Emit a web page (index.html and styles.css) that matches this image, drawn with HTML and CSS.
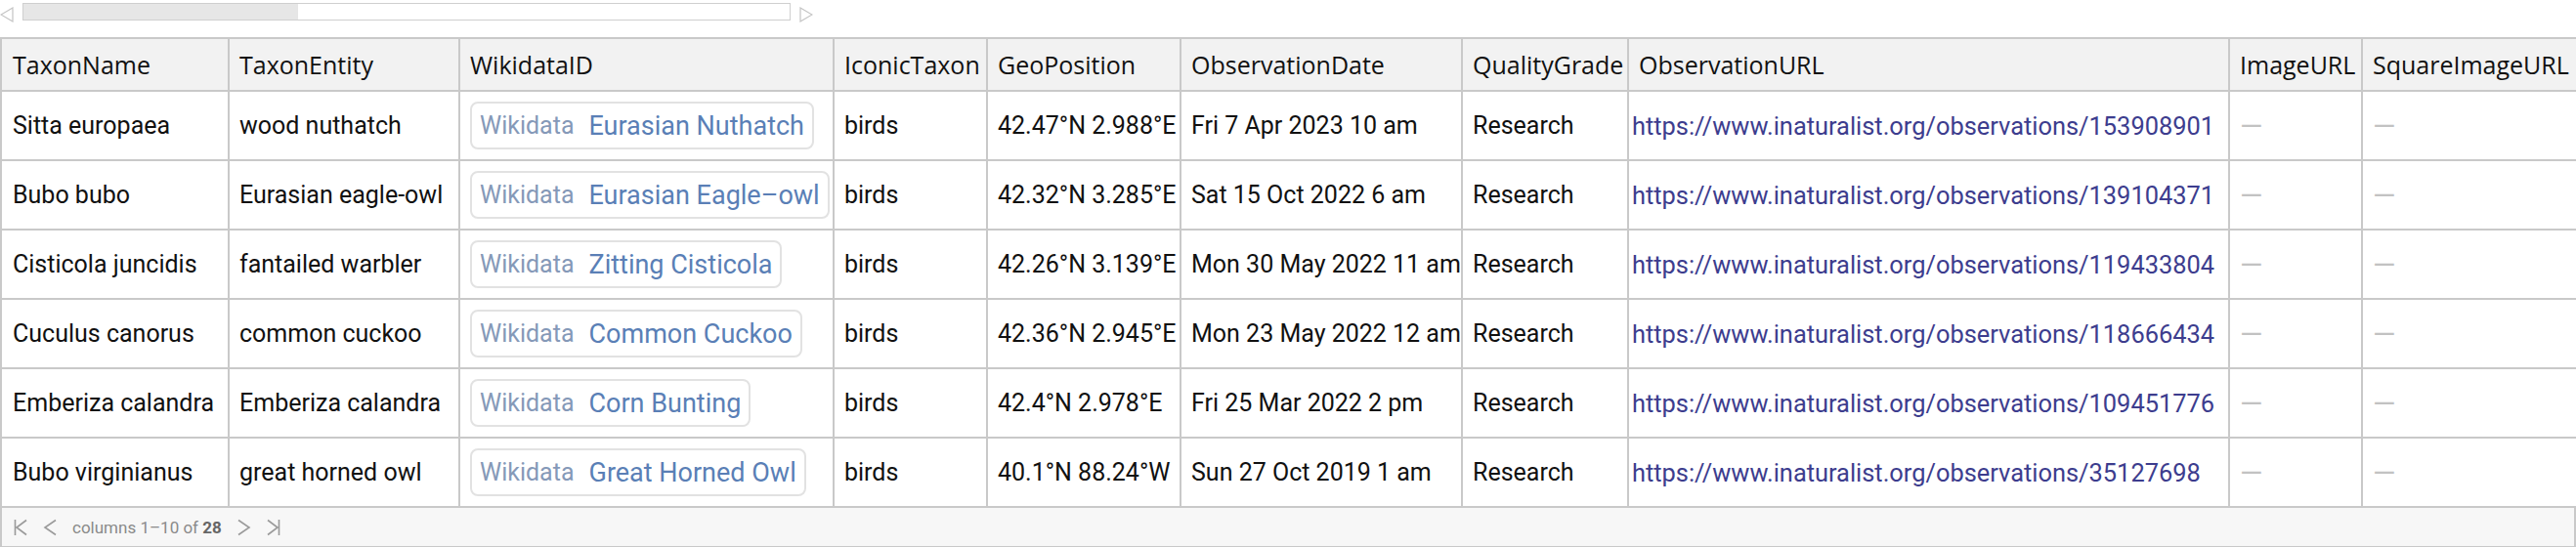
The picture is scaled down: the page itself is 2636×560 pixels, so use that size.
FILE: index.html
```html
<!DOCTYPE html>
<html>
<head>
<meta charset="utf-8">
<link rel="stylesheet" href="styles.css">
</head>
<body>
<div class="page">
  <div class="hscroll">
    <svg class="arrow" width="14" height="16" viewBox="0 0 14 16"><polygon points="13,1 13,15 1,8" fill="none" stroke="#c4c4c4" stroke-width="1.2"/></svg>
    <div class="track"><div class="thumb"></div></div>
    <svg class="arrow" width="14" height="16" viewBox="0 0 14 16"><polygon points="1,1 1,15 13,8" fill="none" stroke="#c4c4c4" stroke-width="1.2"/></svg>
  </div>
  <div class="grid">
    <table class="data">
      <colgroup>
        <col class="c1"><col class="c2"><col class="c3"><col class="c4"><col class="c5">
        <col class="c6"><col class="c7"><col class="c8"><col class="c9"><col class="c10">
      </colgroup>
      <thead>
        <tr class="head">
          <th>TaxonName</th><th>TaxonEntity</th><th>WikidataID</th><th>IconicTaxon</th><th>GeoPosition</th>
          <th>ObservationDate</th><th>QualityGrade</th><th>ObservationURL</th><th>ImageURL</th><th>SquareImageURL</th>
        </tr>
      </thead>
      <tbody>
        <tr>
          <td>Sitta europaea</td><td>wood nuthatch</td>
          <td><span class="chip"><span class="chip-src">Wikidata</span><span class="chip-label">Eurasian Nuthatch</span></span></td>
          <td>birds</td><td>42.47°N 2.988°E</td><td>Fri 7 Apr 2023 10 am</td><td>Research</td>
          <td class="url">https://www.inaturalist.org/observations/153908901</td><td class="none">—</td><td class="none">—</td>
        </tr>
        <tr>
          <td>Bubo bubo</td><td>Eurasian eagle-owl</td>
          <td><span class="chip"><span class="chip-src">Wikidata</span><span class="chip-label">Eurasian Eagle–owl</span></span></td>
          <td>birds</td><td>42.32°N 3.285°E</td><td>Sat 15 Oct 2022 6 am</td><td>Research</td>
          <td class="url">https://www.inaturalist.org/observations/139104371</td><td class="none">—</td><td class="none">—</td>
        </tr>
        <tr>
          <td>Cisticola juncidis</td><td>fantailed warbler</td>
          <td><span class="chip"><span class="chip-src">Wikidata</span><span class="chip-label">Zitting Cisticola</span></span></td>
          <td>birds</td><td>42.26°N 3.139°E</td><td>Mon 30 May 2022 11 am</td><td>Research</td>
          <td class="url">https://www.inaturalist.org/observations/119433804</td><td class="none">—</td><td class="none">—</td>
        </tr>
        <tr>
          <td>Cuculus canorus</td><td>common cuckoo</td>
          <td><span class="chip"><span class="chip-src">Wikidata</span><span class="chip-label">Common Cuckoo</span></span></td>
          <td>birds</td><td>42.36°N 2.945°E</td><td>Mon 23 May 2022 12 am</td><td>Research</td>
          <td class="url">https://www.inaturalist.org/observations/118666434</td><td class="none">—</td><td class="none">—</td>
        </tr>
        <tr>
          <td>Emberiza calandra</td><td>Emberiza calandra</td>
          <td><span class="chip"><span class="chip-src">Wikidata</span><span class="chip-label">Corn Bunting</span></span></td>
          <td>birds</td><td>42.4°N 2.978°E</td><td>Fri 25 Mar 2022 2 pm</td><td>Research</td>
          <td class="url">https://www.inaturalist.org/observations/109451776</td><td class="none">—</td><td class="none">—</td>
        </tr>
        <tr>
          <td>Bubo virginianus</td><td>great horned owl</td>
          <td><span class="chip"><span class="chip-src">Wikidata</span><span class="chip-label">Great Horned Owl</span></span></td>
          <td>birds</td><td>40.1°N 88.24°W</td><td>Sun 27 Oct 2019 1 am</td><td>Research</td>
          <td class="url">https://www.inaturalist.org/observations/35127698</td><td class="none">—</td><td class="none">—</td>
        </tr>
      </tbody>
    </table>
    <div class="footer">
      <svg class="nav" width="14" height="18" viewBox="0 0 14 18"><path d="M1.5 1v16M13 1.5L3 9l10 7.5" fill="none" stroke="#9a9a9a" stroke-width="1.6"/></svg>
      <svg class="nav" width="14" height="18" viewBox="0 0 14 18"><path d="M13 1.5L2 9l11 7.5" fill="none" stroke="#9a9a9a" stroke-width="1.6"/></svg>
      <span class="pager">columns 1–10 of <b>28</b></span>
      <svg class="nav" width="14" height="18" viewBox="0 0 14 18"><path d="M1 1.5L12 9 1 16.5" fill="none" stroke="#9a9a9a" stroke-width="1.6"/></svg>
      <svg class="nav" width="14" height="18" viewBox="0 0 14 18"><path d="M1 1.5L11 9 1 16.5M12.5 1v16" fill="none" stroke="#9a9a9a" stroke-width="1.6"/></svg>
    </div>
  </div>
</div>
</body>
</html>
```

FILE: styles.css
```css
html, body {
  margin: 0;
  padding: 0;
  background: #ffffff;
}

.page {
  width: 2636px;
  font-family: "Roboto", "Lato", sans-serif;
  color: #111;
}

.hscroll {
  display: flex;
  align-items: center;
  height: 22px;
  gap: 9px;
}

.arrow {
  margin-top: 8px;
}

.track {
  width: 784px;
  height: 16px;
  border: 1px solid #cfcfcf;
  background: #fff;
  margin-top: 1px;
}

.thumb {
  width: 281px;
  height: 16px;
  background: #e6e6e6;
}

.grid {
  margin-top: 16px;
}

.data {
  width: 2636px;
  table-layout: fixed;
  border-collapse: collapse;
}

.c1 { width: 233px; }
.c2 { width: 236px; }
.c3 { width: 383px; }
.c4 { width: 157px; }
.c5 { width: 198px; }
.c6 { width: 288px; }
.c7 { width: 170px; }
.c8 { width: 615px; }
.c9 { width: 136px; }
.c10 { width: 220px; }

.data th,
.data td {
  border: 2px solid #c9c9c9;
  padding: 0 0 0 10px;
  text-align: left;
  white-space: nowrap;
  overflow: hidden;
  vertical-align: middle;
}

.head {
  height: 54px;
  background: #f2f2f2;
}

.data th {
  font-family: "Open Sans", "Noto Sans", sans-serif;
  font-weight: 400;
  font-size: 25px;
  color: #111;
}

.data tbody tr {
  height: 71px;
}

.data td {
  font-size: 25px;
}

.data td:first-child,
.data th:first-child {
  padding-left: 11px;
}

.data td.url {
  color: #3d3d8e;
  font-size: 25.4px;
  padding-left: 3px;
}

.data td.none {
  color: #c2c2c2;
  font-size: 30px;
}

.chip {
  display: inline-flex;
  align-items: center;
  height: 45px;
  padding: 0 8px;
  border: 2px solid #e2e2e2;
  border-radius: 8px;
  gap: 15px;
}

.chip-src {
  color: #8599b8;
  font-size: 25px;
}

.chip-label {
  color: #5a7fb6;
  font-size: 27px;
}

.footer {
  display: flex;
  align-items: center;
  height: 39px;
  background: #f7f7f7;
  border: 2px solid #c9c9c9;
  border-top: none;
  padding-left: 12px;
  gap: 16px;
}

.pager {
  font-size: 17px;
  color: #8a8a8a;
}

.pager b {
  color: #666;
  font-weight: 700;
}
```
